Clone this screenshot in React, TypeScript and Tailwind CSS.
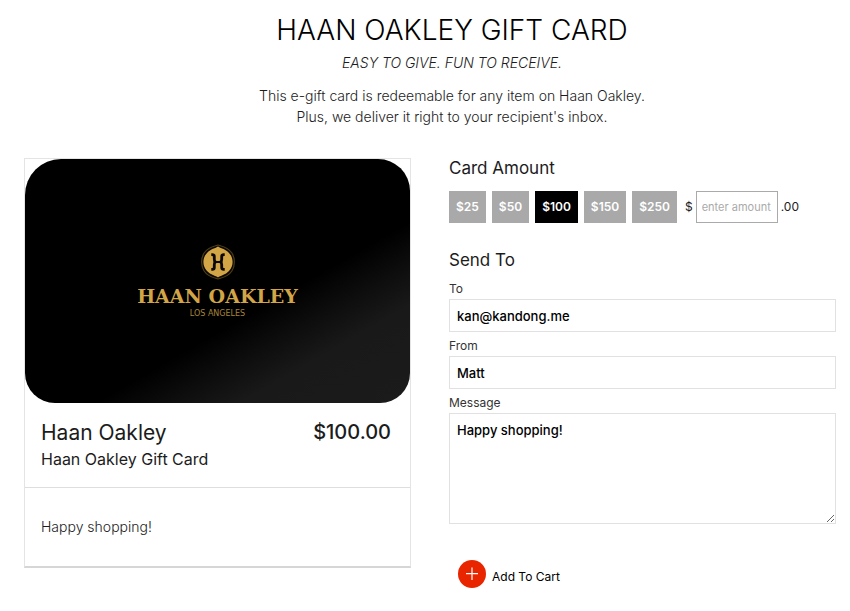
import { useState } from "react";
import type { ReactNode } from "react";

const AMOUNTS = [25, 50, 100, 150, 250];

function BrandMark() {
  return (
    <svg width="36" height="36" viewBox="0 0 36 36" aria-hidden="true">
      <path
        d="M18 1C20 1.800 28 2.900 31.900 9C35.200 14.200 35.200 21.800 31.900 27C28 33.100 20 34.200 18 35C16 34.200 8 33.100 4.100 27C0.800 21.800 0.800 14.200 4.100 9C8 2.900 16 1.800 18 1Z"
        fill="#0b0803"
        stroke="#4d3c18"
        strokeWidth="1.200"
      />
      <path
        d="M18 2.500C20.200 4.100 25.400 5 29 8.900C33.800 14 33.800 22 29 27.100C25.400 31 20.200 31.900 18 33.500C15.800 31.900 10.600 31 7 27.100C2.200 22 2.200 14 7 8.900C10.600 5 15.800 4.100 18 2.500Z"
        fill="#d2a546"
      />
      <g fill="none" stroke="#0b0803" strokeWidth="2.800">
        <path d="M11.300 10.600H12.200Q14.300 10.600 14.300 12.400V15.200Q14.300 17.200 15.400 18Q14.300 18.800 14.300 20.800V23.600Q14.300 25.400 12.200 25.400H11.300" />
        <path d="M24.700 10.600H23.800Q21.700 10.600 21.700 12.400V15.200Q21.700 17.200 20.600 18Q21.700 18.800 21.700 20.800V23.600Q21.700 25.400 23.800 25.400H24.700" />
        <path d="M14.500 18H21.500" strokeWidth="2" />
      </g>
    </svg>
  );
}

function CardArt() {
  return (
    <div className="flex aspect-[385/244] flex-col items-center justify-center rounded-[36px_32px_30px_30px] bg-black bg-[linear-gradient(150deg,#000_0%,#000_61%,#0d0d0d_70%,#191919_79%,#1b1b1b_100%)] text-[#d2a546]">
      <BrandMark />
      <p className="mt-1.5 font-['DejaVu_Serif',serif] text-[19px] leading-5 font-bold">HAAN OAKLEY</p>
      <p className="mt-1 font-['DejaVu_Sans',sans-serif] text-[8px] leading-2 text-[#a88438]">LOS ANGELES</p>
    </div>
  );
}

function Field({ id, label, children }: { id: string; label: string; children: ReactNode }) {
  return (
    <div>
      <label htmlFor={id} className="block pt-1 text-[12px] leading-5 text-[#333]">
        {label}
      </label>
      {children}
    </div>
  );
}

const BOX = "block w-full border border-[#e1e1e1] bg-white px-[7px] text-[13px] font-medium text-black";

export default function App() {
  const [amount, setAmount] = useState(100);
  const [custom, setCustom] = useState("");
  const [to, setTo] = useState("kan@kandong.me");
  const [from, setFrom] = useState("Matt");
  const [message, setMessage] = useState("Happy shopping!");

  return (
    <main className="bg-white pr-3.5 pb-6 pl-6 font-[Inter,sans-serif] text-[#1c1c1c]">
      <header className="pt-3 pl-11 text-center">
        <h1 className="text-[28px] leading-9 font-light text-black">HAAN OAKLEY GIFT CARD</h1>
        <p className="mt-[3px] text-[14px] leading-6 font-light italic">EASY TO GIVE. FUN TO RECEIVE.</p>
        <p className="mt-2.5 text-[14px] leading-[21px] font-light">
          This e-gift card is redeemable for any item on Haan Oakley.
          <br />
          Plus, we deliver it right to your recipient's inbox.
        </p>
      </header>

      <div className="mt-[31px] grid grid-cols-2 items-start gap-[38px]">
        <section className="border border-b-2 border-[#e4e4e4] border-b-[#d6d6d6]">
          <CardArt />
          <div className="flex items-start justify-between border-b border-[#dedede] pt-4 pr-[19px] pb-4 pl-4">
            <div>
              <h2 className="text-[21px] leading-7">Haan Oakley</h2>
              <p className="text-[16px] leading-6">Haan Oakley Gift Card</p>
            </div>
            <p className="text-[20px] leading-[26px] font-medium">$100.00</p>
          </div>
          <p className="px-4 py-7 text-[14px] leading-[22px] font-light">{message}</p>
        </section>

        <form onSubmit={(e) => e.preventDefault()}>
          <h2 className="text-[17px] leading-5">Card Amount</h2>
          <div className="mt-[13px] flex items-center text-[12px]">
            <div className="flex gap-1.5">
              {AMOUNTS.map((value) => (
                <button
                  key={value}
                  type="button"
                  aria-pressed={amount === value}
                  onClick={() => setAmount(value)}
                  className={`h-8 px-[7px] font-semibold text-white ${amount === value ? "bg-black" : "bg-[#a9a9a9]"}`}
                >
                  ${value}
                </button>
              ))}
            </div>
            <label htmlFor="custom" className="ml-2">
              $
            </label>
            <input
              id="custom"
              value={custom}
              onChange={(e) => setCustom(e.target.value)}
              placeholder="enter amount"
              className="mx-[3px] h-8 w-[82px] border border-[#aaa] px-[5px] text-[11px] placeholder:text-[#aaa]"
            />
            <span>.00</span>
          </div>

          <h2 className="mt-[27px] text-[17px] leading-5">Send To</h2>
          <div className="mt-[5px]">
            <Field id="to" label="To">
              <input id="to" type="email" value={to} onChange={(e) => setTo(e.target.value)} className={`${BOX} h-[33px]`} />
            </Field>
            <Field id="from" label="From">
              <input id="from" value={from} onChange={(e) => setFrom(e.target.value)} className={`${BOX} h-[33px]`} />
            </Field>
            <Field id="message" label="Message">
              <textarea
                id="message"
                value={message}
                onChange={(e) => setMessage(e.target.value)}
                className={`${BOX} h-[111px] py-1.5 leading-5`}
              />
            </Field>
          </div>

          <button type="submit" className="mt-9 ml-[9px] flex items-center gap-1.5 text-[12px] text-black">
            <svg width="28" height="28" viewBox="0 0 28 28" aria-hidden="true">
              <circle cx="14" cy="14" r="14" fill="#e92500" />
              <path d="M14 7.500V20M8 13.700H20" stroke="#fff" strokeWidth="1.200" />
            </svg>
            <span className="pt-1.5">Add To Cart</span>
          </button>
        </form>
      </div>
    </main>
  );
}
